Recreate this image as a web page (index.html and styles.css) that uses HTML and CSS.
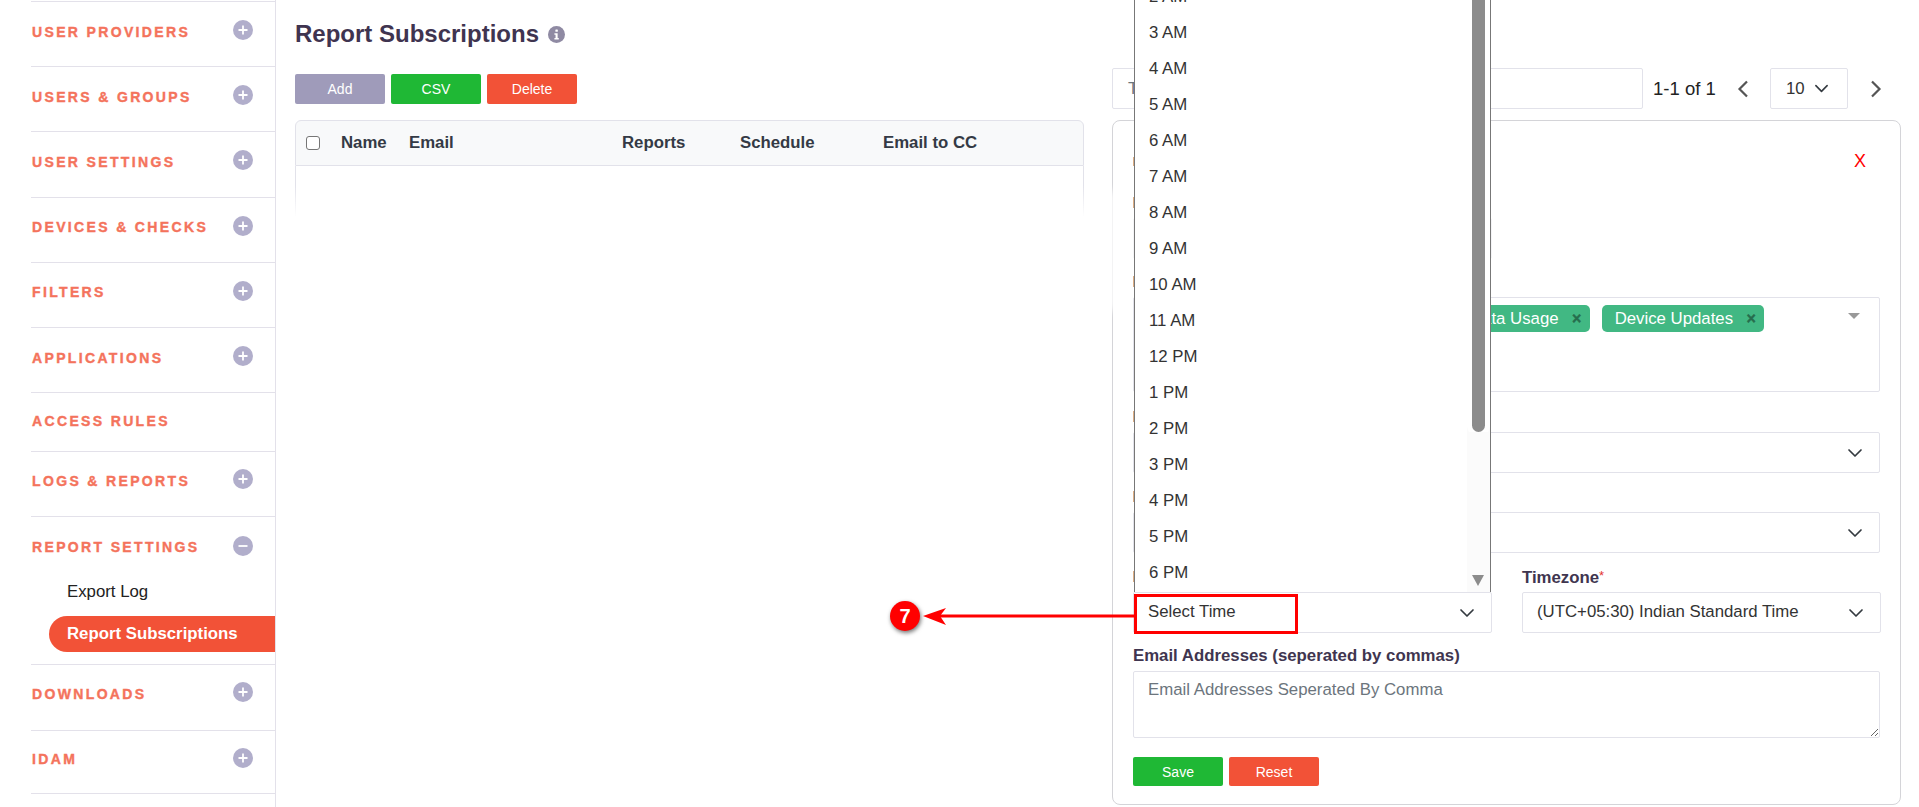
FILE: index.html
```html
<!DOCTYPE html>
<html lang="en">
<head>
<meta charset="utf-8">
<title>Report Subscriptions</title>
<link rel="stylesheet" href="styles.css">
</head>
<body>
<div class="page">
  <aside class="sidebar">
    <div class="nav-row"><span class="nav-title">USER PROVIDERS</span><svg class="toggle" viewBox="0 0 20 20"><circle cx="10" cy="10" r="10"/><path d="M5.5 10h9M10 5.5v9"/></svg></div>
    <div class="nav-row"><span class="nav-title">USERS &amp; GROUPS</span><svg class="toggle" viewBox="0 0 20 20"><circle cx="10" cy="10" r="10"/><path d="M5.5 10h9M10 5.5v9"/></svg></div>
    <div class="nav-row"><span class="nav-title">USER SETTINGS</span><svg class="toggle" viewBox="0 0 20 20"><circle cx="10" cy="10" r="10"/><path d="M5.5 10h9M10 5.5v9"/></svg></div>
    <div class="nav-row"><span class="nav-title">DEVICES &amp; CHECKS</span><svg class="toggle" viewBox="0 0 20 20"><circle cx="10" cy="10" r="10"/><path d="M5.5 10h9M10 5.5v9"/></svg></div>
    <div class="nav-row"><span class="nav-title">FILTERS</span><svg class="toggle" viewBox="0 0 20 20"><circle cx="10" cy="10" r="10"/><path d="M5.5 10h9M10 5.5v9"/></svg></div>
    <div class="nav-row"><span class="nav-title">APPLICATIONS</span><svg class="toggle" viewBox="0 0 20 20"><circle cx="10" cy="10" r="10"/><path d="M5.5 10h9M10 5.5v9"/></svg></div>
    <div class="nav-row nav-row-short"><span class="nav-title">ACCESS RULES</span></div>
    <div class="nav-row nav-row-tight"><span class="nav-title">LOGS &amp; REPORTS</span><svg class="toggle" viewBox="0 0 20 20"><circle cx="10" cy="10" r="10"/><path d="M5.5 10h9M10 5.5v9"/></svg></div>
    <div class="nav-group">
      <div class="nav-head"><span class="nav-title">REPORT SETTINGS</span><svg class="toggle" viewBox="0 0 20 20"><circle cx="10" cy="10" r="10"/><path d="M5.5 10h9"/></svg></div>
      <a class="sub-link">Export Log</a>
      <a class="sub-link sub-link-active">Report Subscriptions</a>
    </div>
    <div class="nav-row nav-row-tight"><span class="nav-title">DOWNLOADS</span><svg class="toggle" viewBox="0 0 20 20"><circle cx="10" cy="10" r="10"/><path d="M5.5 10h9M10 5.5v9"/></svg></div>
    <div class="nav-row"><span class="nav-title">IDAM</span><svg class="toggle" viewBox="0 0 20 20"><circle cx="10" cy="10" r="10"/><path d="M5.5 10h9M10 5.5v9"/></svg></div>
  </aside>

  <main class="main">
    <section class="col-left">
      <h1 class="page-title">Report Subscriptions
        <svg class="info" viewBox="0 0 18 18"><circle cx="9" cy="9" r="9"/><rect x="7.8" y="3.6" width="2.6" height="2.6" rx="0.6"/><path d="M6.8 7.6h3.4v5.2h1.2v1.6H6.8v-1.6h1.2V9.2H6.8z"/></svg>
      </h1>
      <div class="toolbar">
        <button class="btn btn-muted">Add</button>
        <button class="btn btn-green">CSV</button>
        <button class="btn btn-red">Delete</button>
      </div>
      <div class="table">
        <div class="table-head">
          <span class="check"></span>
          <span class="th th-name">Name</span>
          <span class="th th-email">Email</span>
          <span class="th th-reports">Reports</span>
          <span class="th th-schedule">Schedule</span>
          <span class="th">Email to CC</span>
        </div>
        <div class="table-body"></div>
      </div>
    </section>

    <section class="col-right">
      <div class="search-row">
        <div class="search">T</div>
        <span class="count">1-1 of 1</span>
        <svg class="pager pager-prev" viewBox="0 0 12 18"><path d="M10 1.5 2.5 9l7.5 7.5"/></svg>
        <div class="page-size">10<svg class="chev" viewBox="0 0 16 16"><path d="m2 5 6 6 6-6"/></svg></div>
        <svg class="pager pager-next" viewBox="0 0 12 18"><path d="M2 1.5 9.5 9 2 16.5"/></svg>
      </div>

      <div class="card">
        <div class="card-head"><i class="stub stub-title"></i><span class="close">X</span></div>

        <div class="grid-half">
          <div class="field field-name">
            <div class="label"><i class="stub"></i></div>
            <div class="control control-faint"></div>
          </div>
        </div>

        <div class="field">
          <div class="label"><i class="stub"></i></div>
          <div class="multi">
            <span class="chip">Data Usage<b class="chip-x">×</b></span>
            <span class="chip">Device Updates<b class="chip-x">×</b></span>
            <span class="caret"></span>
          </div>
        </div>

        <div class="field">
          <div class="label"><i class="stub"></i></div>
          <div class="control"><svg class="chev" viewBox="0 0 16 16"><path d="m2 5 6 6 6-6"/></svg></div>
        </div>

        <div class="field">
          <div class="label"><i class="stub"></i></div>
          <div class="control"><svg class="chev" viewBox="0 0 16 16"><path d="m2 5 6 6 6-6"/></svg></div>
        </div>

        <div class="grid-half">
          <div class="field">
            <div class="label"><i class="stub"></i></div>
            <div class="control control-time">
              <span>Select Time</span><svg class="chev" viewBox="0 0 16 16"><path d="m2 5 6 6 6-6"/></svg>
              <div class="dropdown">
                <div class="opt">2 AM</div><div class="opt">3 AM</div><div class="opt">4 AM</div><div class="opt">5 AM</div>
                <div class="opt">6 AM</div><div class="opt">7 AM</div><div class="opt">8 AM</div><div class="opt">9 AM</div>
                <div class="opt">10 AM</div><div class="opt">11 AM</div><div class="opt">12 PM</div><div class="opt">1 PM</div>
                <div class="opt">2 PM</div><div class="opt">3 PM</div><div class="opt">4 PM</div><div class="opt">5 PM</div>
                <div class="opt">6 PM</div>
                <div class="scroll-track"><div class="scroll-thumb"></div><div class="scroll-arrow"></div></div>
              </div>
              <div class="callout-box"></div>
              <svg class="callout-arrow" viewBox="0 0 212 20"><path d="M16 10h196" /><polygon points="0,10 23,2 17,10 23,19"/></svg>
              <div class="callout-badge">7</div>
            </div>
          </div>
          <div class="field">
            <label class="label">Timezone<span class="req">*</span></label>
            <div class="control"><span>(UTC+05:30) Indian Standard Time</span><svg class="chev" viewBox="0 0 16 16"><path d="m2 5 6 6 6-6"/></svg></div>
          </div>
        </div>

        <div class="field field-email">
          <label class="label">Email Addresses (seperated by commas)</label>
          <textarea class="textarea" placeholder="Email Addresses Seperated By Comma"></textarea>
        </div>

        <div class="actions">
          <button class="btn btn-green">Save</button>
          <button class="btn btn-red">Reset</button>
        </div>
        <div class="veil"></div>
      </div>
    </section>
  </main>
</div>
</body>
</html>
```
FILE: styles.css
```css
* { box-sizing: border-box; }
html, body { margin: 0; height: 807px; overflow: hidden; background: #fff; }
body { font-family: "Liberation Sans", Arial, sans-serif; font-size: 16.8px; color: #333; }
.page { display: flex; height: 807px; }

/* sidebar */
.sidebar { width: 276px; flex: none; padding: 1px 0 0 31px; border-right: 1px solid #e3e1ea; }
.nav-row, .nav-head { display: flex; align-items: center; justify-content: space-between; padding: 0 22px 0 1px; }
.nav-row { height: 65.2px; padding-bottom: 5px; border-top: 1px solid #e3e1ea; }
.nav-row-short { height: 59px; padding-bottom: 2px; }
.nav-row-tight { padding-bottom: 7px; }
.nav-row:last-child { height: 64.5px; border-bottom: 1px solid #e3e1ea; }
.nav-group { border-top: 1px solid #e3e1ea; height: 148px; }
.nav-head { height: 60px; }
.nav-title { font-size: 14px; font-weight: 700; letter-spacing: 2.35px; color: #f4735c; -webkit-text-stroke: 0.4px #f4735c; white-space: nowrap; }
.toggle { width: 20px; height: 20px; margin-bottom: 3px; }
.toggle circle { fill: #b1aecb; }
.toggle path { stroke: #fff; stroke-width: 1.8; fill: none; }
.sub-link { display: flex; align-items: center; height: 30px; margin-left: 36px; color: #222; }
.sub-link-active { height: 36px; margin: 9px 0 0 18px; padding-left: 18px; border-radius: 18px 0 0 18px; background: #f25237; color: #fff; font-weight: 700; }

/* main */
.main { flex: 1; display: flex; gap: 28px; padding: 0 18px 0 19px; }
.col-left, .col-right { width: 789px; flex: none; }
.page-title { display: flex; align-items: center; gap: 9px; height: 68px; margin: 0 0 6px; font-size: 24px; font-weight: 700; color: #3f3450; }
.info { width: 17px; height: 17px; }
.info circle { fill: #8f8aa3; }
.info rect, .info path { fill: #fff; }
.toolbar { display: flex; gap: 6px; }
.btn { width: 90px; height: 30px; padding: 0; border: 0; border-radius: 2px; color: #fff; font: 14px "Liberation Sans", Arial, sans-serif; }
.btn-muted { background: #9f9bba; }
.btn-green { background: #1fb835; }
.btn-red { background: #f25237; }
.table { margin-top: 16px; }
.table-head { display: flex; align-items: center; height: 46px; padding-left: 10px; background: #f8f9fa; border: 1px solid #e2e2ea; border-radius: 6px 6px 0 0; }
.check { width: 14px; height: 14px; border: 1px solid #767676; border-radius: 3px; background: #fff; margin-right: 21px; }
.th { font-weight: 700; color: #343a45; white-space: nowrap; }
.th-name { width: 68px; }
.th-email { width: 213px; }
.th-reports { width: 118px; }
.th-schedule { width: 143px; }
.table-body { height: 50px; border-style: solid; border-width: 0 1px; border-image: linear-gradient(#e2e2ea 40%, #fff) 1; }

/* right */
.col-right { padding-top: 68px; }
.search-row { display: flex; align-items: center; height: 41px; }
.search { width: 531px; height: 41px; padding: 0 15px; line-height: 39px; border: 1px solid #e2e2ea; border-radius: 2px; color: #6c757d; }
.count { margin-left: 10px; width: 63px; font-size: 18.5px; color: #222; white-space: nowrap; }
.pager { width: 12px; height: 18px; fill: none; stroke: #555; stroke-width: 2.2; }
.pager-prev { margin-left: 21px; }
.page-size { position: relative; width: 78px; height: 41px; margin-left: 21px; padding-left: 15px; line-height: 39px; border: 1px solid #e2e2ea; border-radius: 2px; }
.pager-next { margin-left: 22px; }
.chev { position: absolute; right: 16px; top: 50%; width: 16px; height: 16px; margin-top: -8px; fill: none; stroke: #343a40; stroke-width: 1.7; stroke-linecap: round; stroke-linejoin: round; }
.page-size .chev { right: 18px; width: 15px; height: 15px; }
.card { position: relative; height: 685px; margin-top: 11px; padding: 20px 20px 0; border: 1px solid #d4d4d8; border-radius: 8px; }
.card-head { display: flex; justify-content: space-between; align-items: center; height: 40px; margin-bottom: 9px; padding-right: 14px; }
.close { color: #f00; font-size: 18px; }
.grid-half { display: grid; grid-template-columns: 359px 359px; gap: 30px; }
.field { margin-bottom: 11px; }
.field-name { margin-bottom: 10px; }
.label { display: block; height: 24px; margin-bottom: 4px; font-weight: 700; line-height: 24px; color: #40354f; white-space: nowrap; }
.stub { display: block; width: 1px; height: 11px; background: #dcae85; transform: translateY(7px); }
.stub-title { height: 9px; transform: none; }
.req { color: #e3342f; font-weight: 400; vertical-align: 3px; font-size: 13px; }
.control { position: relative; display: flex; align-items: center; height: 41px; padding: 0 14px; border: 1px solid #e2e2ea; border-radius: 2px; background: #fff; color: #333; }
.control > span { transform: translateY(-1px); }
.control-faint { border-color: #f4f4f6; }
.multi { position: relative; display: flex; align-items: flex-start; gap: 12px; height: 95px; margin-bottom: 12px; padding: 7px 0 0 323px; border: 1px solid #e2e2ea; border-radius: 2px; }
.chip { display: flex; align-items: center; height: 27px; padding-left: 13px; border-radius: 5px; background: #41b883; color: #fff; white-space: nowrap; }
.chip-x { width: 31px; padding-left: 5px; text-align: center; color: #266d4d; font-size: 16px; -webkit-text-stroke: 0.4px #266d4d; }
.caret { position: absolute; right: 19px; top: 15px; border: 6px solid transparent; border-top: 6px solid #999; border-bottom: 0; }

/* open time dropdown */
.dropdown { position: absolute; left: 0; right: 0; bottom: 40px; height: 620px; display: flex; flex-direction: column; justify-content: flex-end; padding-bottom: 1px; overflow: hidden; background: #fff; border: solid #777; border-width: 0 1px; }
.opt { flex: none; height: 36px; padding-left: 14px; line-height: 36px; color: #333; }
.scroll-track { position: absolute; right: 0; top: 0; bottom: 0; width: 23px; background: #fbfbfb; }
.scroll-thumb { position: absolute; left: 5px; width: 13px; height: 460px; top: 0; border-radius: 0 0 7px 7px; background: #8c8c8c; box-shadow: 0 0 0 5px #fff; clip-path: inset(0 -5px 0 -5px); }
.scroll-arrow { position: absolute; left: 5px; bottom: 6px; border: 6.5px solid transparent; border-top: 11px solid #8c8c8c; border-bottom: 0; }

/* annotation callout */
.callout-box { position: absolute; left: 0; top: 1px; width: 164px; height: 40px; border: 3px solid #f00; }
.callout-arrow { position: absolute; left: -211px; top: 13px; width: 212px; height: 20px; }
.callout-arrow path { stroke: #f00; stroke-width: 3; fill: none; }
.callout-arrow polygon { fill: #f00; }
.callout-badge { position: absolute; left: -244px; top: 8px; width: 30px; height: 30px; border-radius: 50%; background: #f00; color: #fff; font-weight: 700; font-size: 20px; line-height: 30px; text-align: center; box-shadow: 1px 2px 4px rgba(0, 0, 0, .55); }

.field-email { margin-bottom: 19px; }
.field-email .label { margin-bottom: 3px; }
.textarea { display: block; width: 100%; height: 67px; padding: 6px 14px; border: 1px solid #e2e2ea; border-radius: 2px; font: 16.8px/24px "Liberation Sans", Arial, sans-serif; resize: vertical; outline: 0; }
.textarea::placeholder { color: #6c757d; opacity: 1; }
.actions { display: flex; gap: 6px; }
.actions .btn { height: 29px; }
.veil { position: absolute; left: -12px; top: 70px; width: 14px; height: 120px; background: #fff; filter: blur(4px); }
```
